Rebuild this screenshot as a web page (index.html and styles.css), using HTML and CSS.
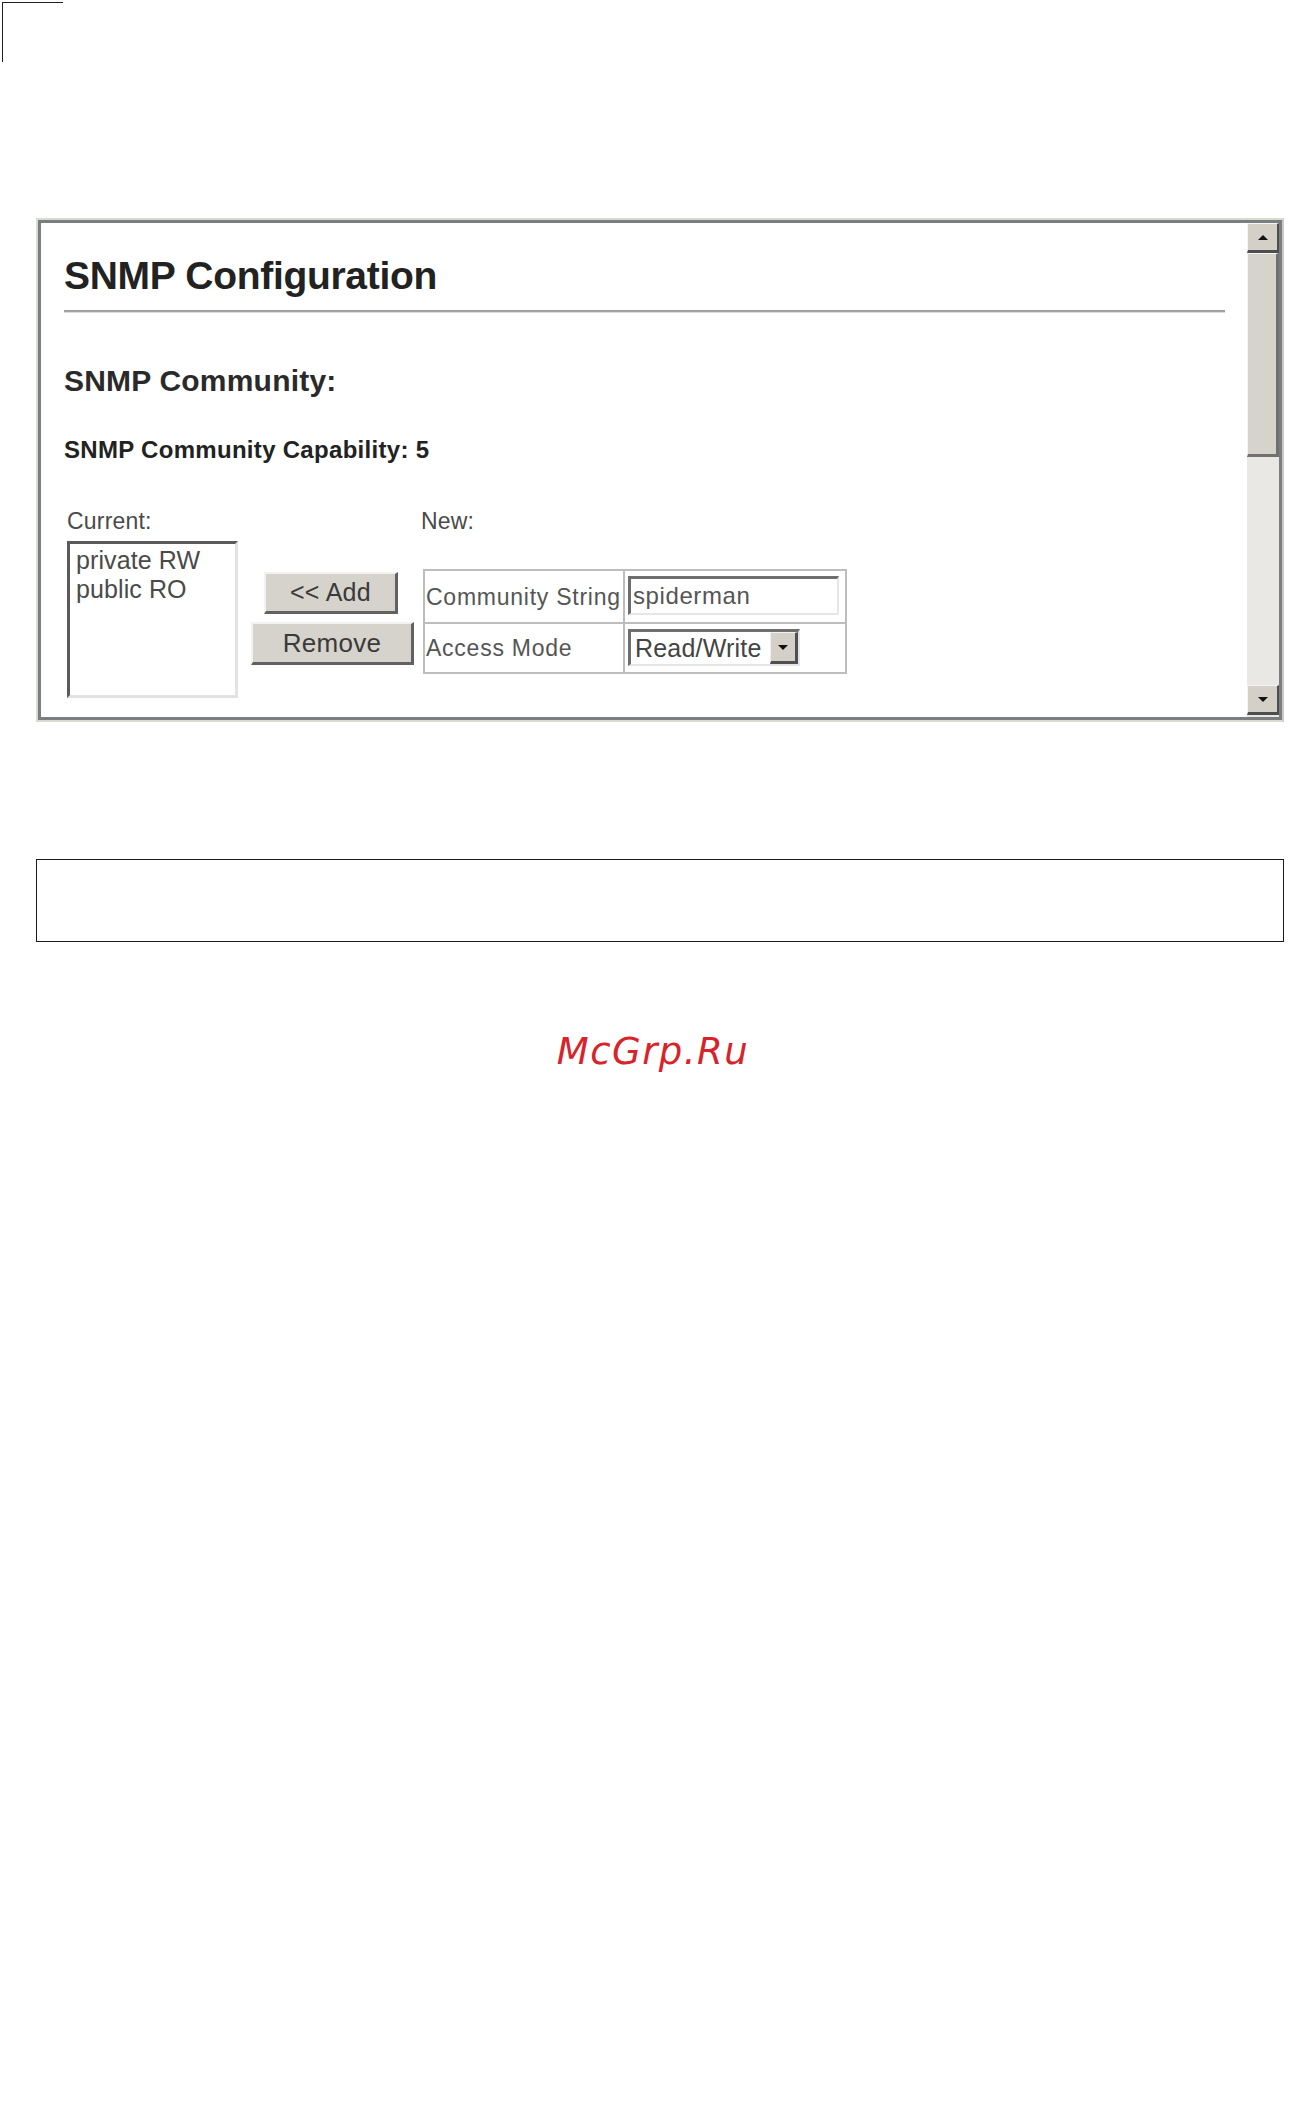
FILE: index.html
```html
<!DOCTYPE html>
<html lang="en">
<head>
<meta charset="utf-8">
<title>SNMP Configuration</title>
<link rel="stylesheet" href="styles.css">
</head>
<body>
<div class="crop-mark"></div>

<div class="panel">
  <div class="panel-frame">
    <div class="content">
      <h1 class="title">SNMP Configuration</h1>
      <div class="rule"></div>
      <h2 class="subtitle">SNMP Community:</h2>
      <div class="capability">SNMP Community Capability: 5</div>

      <div class="editor">
        <div class="col-current">
          <div class="label">Current:</div>
          <div class="listbox">
            <div class="list-item">private RW</div>
            <div class="list-item">public RO</div>
          </div>
        </div>
        <div class="col-buttons">
          <div class="btn btn-add">&lt;&lt; Add</div>
          <div class="btn btn-remove">Remove</div>
        </div>
        <div class="col-new">
          <div class="label">New:</div>
          <div class="new-table">
            <div class="cell cell-label">Community String</div>
            <div class="cell cell-field">
              <div class="textbox">spiderman</div>
            </div>
            <div class="cell cell-label cell-row2">Access Mode</div>
            <div class="cell cell-field cell-row2">
              <div class="select">
                <span class="select-value">Read/Write</span>
                <span class="select-btn"><span class="tri-down small"></span></span>
              </div>
            </div>
          </div>
        </div>
      </div>
    </div>

    <div class="scrollbar">
      <div class="sb-btn sb-up"><span class="tri-up"></span></div>
      <div class="sb-thumb"></div>
      <div class="sb-track"></div>
      <div class="sb-btn sb-down"><span class="tri-down"></span></div>
    </div>
  </div>
</div>

<div class="note-box"></div>

<div class="watermark">McGrp.Ru</div>
</body>
</html>
```

FILE: styles.css
```css
html, body {
  margin: 0;
  padding: 0;
  background: #ffffff;
}

body {
  width: 1296px;
  font-family: "Liberation Sans", Arial, sans-serif;
  color: #222;
}

.crop-mark {
  margin: 2px 0 0 2px;
  width: 60px;
  height: 59px;
  border-top: 1.5px solid #231f20;
  border-left: 1.5px solid #231f20;
}

.panel {
  margin: 156px 0 0 36px;
  width: 1248px;
  height: 504px;
  box-sizing: border-box;
  border: 2px solid #d9dad0;
  border-right-color: #c9cac4;
}

.panel-frame {
  height: 100%;
  box-sizing: border-box;
  border: 3px solid #7b7e81;
  display: flex;
  background: #ffffff;
}

.content {
  flex: 1;
  padding: 31px 22px 0 23px;
  overflow: hidden;
}

.title {
  margin: 0;
  font-size: 39px;
  font-weight: bold;
  color: #222;
  letter-spacing: -0.3px;
}

.rule {
  margin-top: 12px;
  height: 2px;
  background: #9fa0a0;
  border-bottom: 1px solid #dadada;
}

.subtitle {
  margin: 51px 0 0 0;
  font-size: 30px;
  font-weight: bold;
  color: #2a2a2a;
  letter-spacing: 0.2px;
}

.capability {
  margin-top: 38px;
  font-size: 24px;
  font-weight: bold;
  color: #222;
  letter-spacing: 0.3px;
}

.editor {
  margin-top: 44px;
  display: flex;
  align-items: flex-start;
}

.label {
  font-size: 23px;
  color: #4a4a4a;
  letter-spacing: 0.2px;
}

.col-current {
  margin-left: 3px;
}

.listbox {
  margin-top: 6px;
  width: 171px;
  height: 157px;
  box-sizing: border-box;
  border-style: solid;
  border-width: 3px 3px 3px 3px;
  border-color: #5a5a5a #e2e2e2 #e2e2e2 #5a5a5a;
  padding: 2px 0 0 6px;
  background: #fff;
}

.list-item {
  font-size: 25px;
  line-height: 29px;
  color: #4a4a4a;
  letter-spacing: 0.1px;
  white-space: nowrap;
}

.col-buttons {
  margin-left: 13px;
  width: 163px;
  display: flex;
  flex-direction: column;
  align-items: center;
  padding-top: 64px;
}

.btn {
  box-sizing: border-box;
  background: #d6d3cc;
  border-style: solid;
  border-width: 2px 3px 3px 2px;
  border-color: #f2f2f2 #5f6163 #5f6163 #f2f2f2;
  font-size: 25px;
  color: #3a3a3a;
  display: flex;
  align-items: center;
  justify-content: center;
  letter-spacing: 0.3px;
}

.btn-add {
  width: 134px;
  height: 42px;
  margin-left: -3px;
}

.btn-remove {
  margin-top: 8px;
  width: 163px;
  height: 43px;
  font-size: 26px;
}

.col-new {
  margin-left: 7px;
}

.new-table {
  margin-top: 34px;
  margin-left: 2px;
  width: 424px;
  box-sizing: border-box;
  padding: 2px;
  background: #bdbdbd;
  display: grid;
  grid-template-columns: 198px 220px;
  grid-template-rows: 51px 48px;
  gap: 2px;
}

.cell {
  background: #fff;
  display: flex;
  align-items: center;
}

.cell-label {
  padding: 2px 0 0 1px;
  font-size: 23px;
  color: #555;
  letter-spacing: 0.75px;
  white-space: nowrap;
  overflow: hidden;
}

.cell-row2 {
  padding-top: 0;
}

.cell-field {
  align-items: flex-start;
  padding: 5px 0 0 3px;
}

.textbox {
  width: 211px;
  height: 39px;
  box-sizing: border-box;
  border-style: solid;
  border-width: 3px 2px 2px 3px;
  border-color: #6e6e6e #e6e6e6 #e6e6e6 #6e6e6e;
  padding-left: 2px;
  font-size: 24px;
  color: #555;
  letter-spacing: 0.6px;
  display: flex;
  align-items: center;
}

.select {
  width: 172px;
  height: 37px;
  box-sizing: border-box;
  border-style: solid;
  border-width: 3px 2px 2px 3px;
  border-color: #6e6e6e #e6e6e6 #e6e6e6 #6e6e6e;
  display: flex;
  align-items: stretch;
  background: #fff;
}

.select-value {
  flex: 1;
  padding-left: 4px;
  font-size: 25px;
  color: #444;
  letter-spacing: 0.2px;
  display: flex;
  align-items: center;
  white-space: nowrap;
}

.select-btn {
  width: 28px;
  box-sizing: border-box;
  background: #d4d0c8;
  border-style: solid;
  border-width: 1px 3px 3px 1px;
  border-color: #f0f0f0 #505050 #505050 #f0f0f0;
  display: flex;
  align-items: center;
  justify-content: center;
}

.scrollbar {
  width: 32px;
  display: flex;
  flex-direction: column;
  background: #e9e8e4;
}

.sb-btn {
  height: 30px;
  box-sizing: border-box;
  background: #d4d0c8;
  border-style: solid;
  border-width: 1px 2px 3px 1px;
  border-color: #f4f4f4 #4e4e4e #4e4e4e #f4f4f4;
  display: flex;
  align-items: center;
  justify-content: center;
}

.sb-down {
  margin-bottom: 2px;
}

.sb-thumb {
  height: 204px;
  box-sizing: border-box;
  background: #d6d3cd;
  border-style: solid;
  border-width: 1px 3px 3px 1px;
  border-color: #f4f4f4 #707070 #707070 #f4f4f4;
}

.sb-track {
  flex: 1;
}

.tri-up {
  width: 0;
  height: 0;
  border-left: 5px solid transparent;
  border-right: 5px solid transparent;
  border-bottom: 5px solid #111;
}

.tri-down {
  width: 0;
  height: 0;
  border-left: 5px solid transparent;
  border-right: 5px solid transparent;
  border-top: 5px solid #111;
}

.tri-down.small {
  border-left-width: 5px;
  border-right-width: 5px;
  border-top-width: 5px;
}

.note-box {
  margin: 137px 0 0 36px;
  width: 1248px;
  height: 83px;
  box-sizing: border-box;
  border: 1.5px solid #1a1a1a;
}

.watermark {
  margin-top: 88px;
  padding-left: 10px;
  text-align: center;
  font-family: "DejaVu Sans", Verdana, sans-serif;
  font-style: italic;
  font-size: 37px;
  letter-spacing: 1.5px;
  color: #d8232a;
}
```
